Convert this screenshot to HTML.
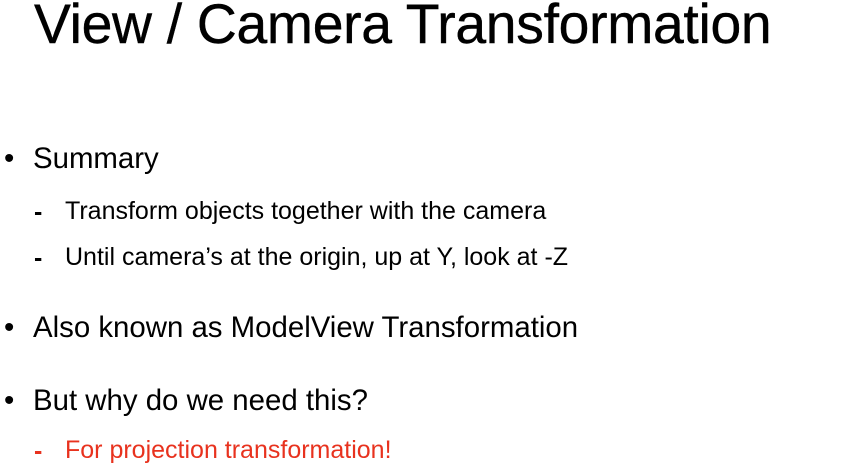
<!DOCTYPE html>
<html><head><style>
body{margin:0;width:867px;height:465px;background:#fff;font-family:"Liberation Sans",Arial,sans-serif;color:#000;position:relative;overflow:hidden}
div{position:absolute;white-space:nowrap}
.t{left:34px;top:-8px;font-size:55.3px;letter-spacing:-0.3px;-webkit-text-stroke:0.4px #000}
.b{left:33px;font-size:29.4px}
.b:before{content:"•";position:absolute;left:-29px}
.s{left:65px;font-size:25px}
.s:before{content:"-";position:absolute;left:-31px;top:1px;font-weight:bold}
.r{color:#e8321e}
</style></head><body>
<div class="t">View / Camera Transformation</div>
<div class="b" style="top:142px">Summary</div>
<div class="s" style="top:197px">Transform objects together with the camera</div>
<div class="s" style="top:243px">Until camera’s at the origin, up at Y, look at -Z</div>
<div class="b" style="top:311px">Also known as ModelView Transformation</div>
<div class="b" style="top:384px">But why do we need this?</div>
<div class="s r" style="top:436px">For projection transformation!</div>
</body></html>
